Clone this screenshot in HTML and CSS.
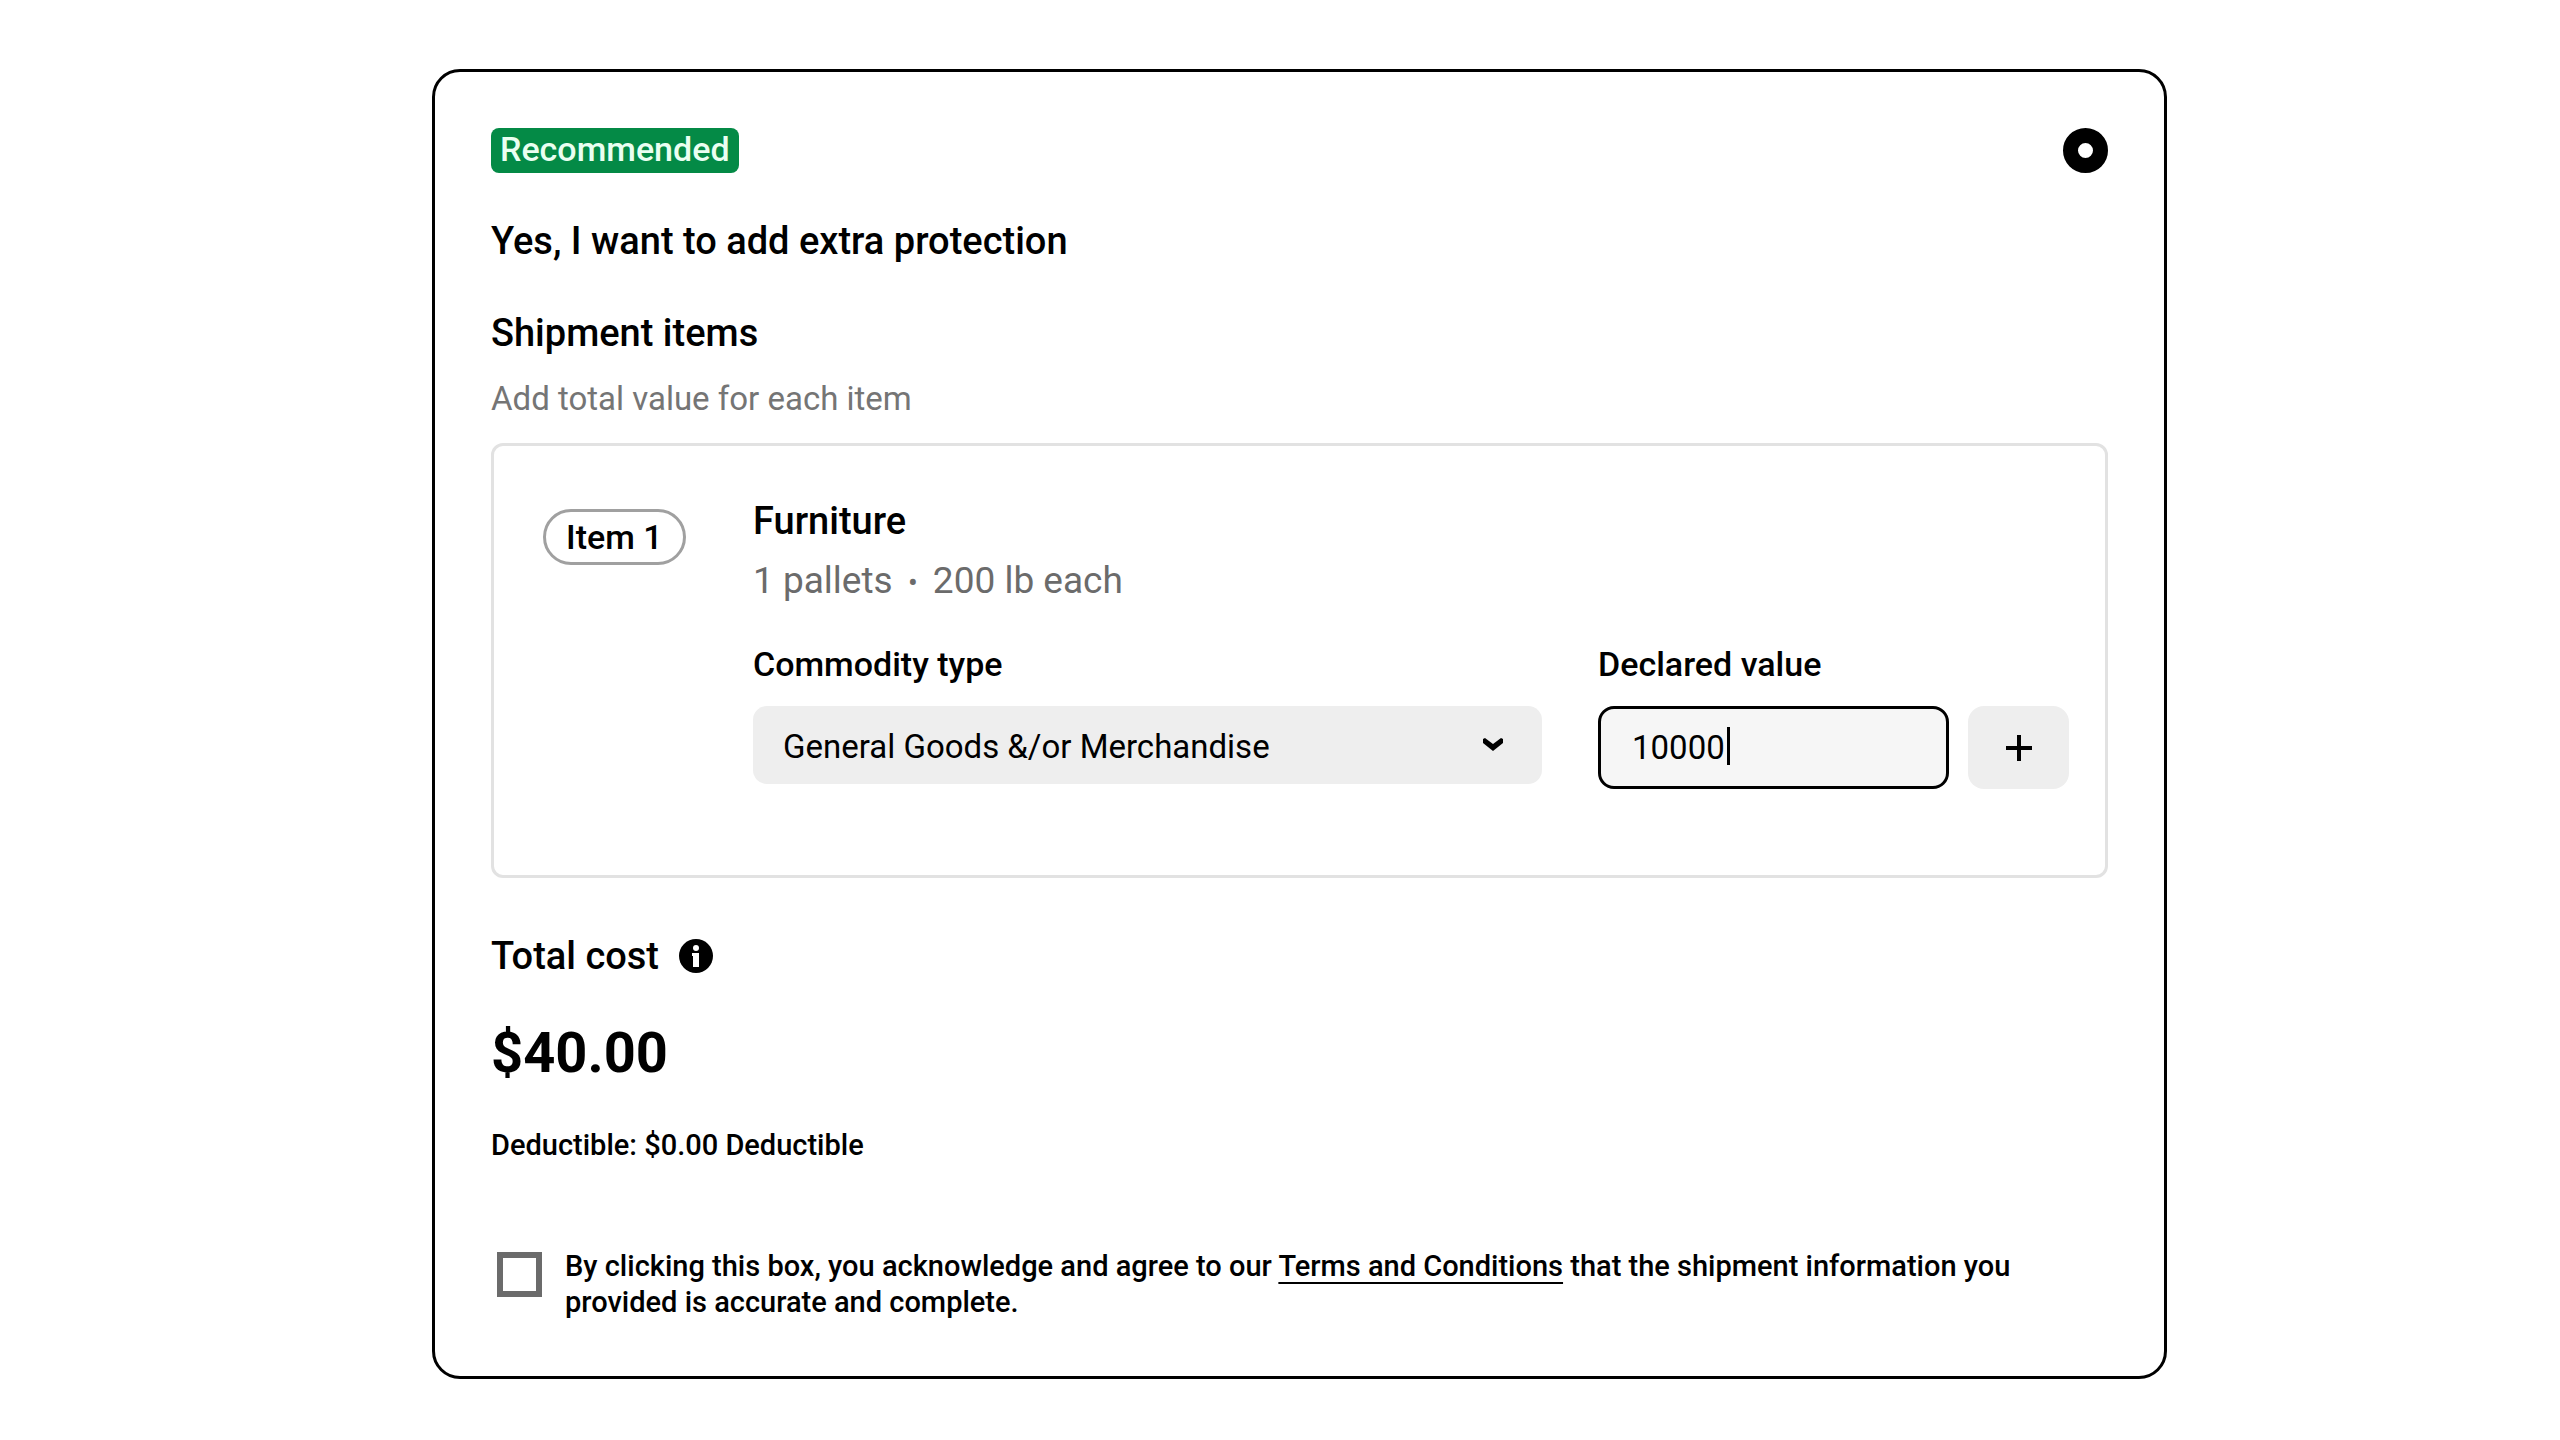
FILE: index.html
```html
<!DOCTYPE html>
<html lang="en">
<head>
    <meta charset="UTF-8">
    <meta name="viewport" content="width=device-width, initial-scale=1.0">
    <title>Extra protection</title>
    <link rel="stylesheet" href="styles.css">
</head>
<body>
    <main>
        <form class="card">
            <div class="card-top">
                <span class="badge">Recommended</span>
                <input type="radio" name="protection" id="protection-yes" class="radio" checked>
            </div>
            <label class="heading" for="protection-yes">Yes, I want to add extra protection</label>
            <h2 class="heading">Shipment items</h2>
            <p class="hint">Add total value for each item</p>

            <section class="item">
                <div><span class="pill">Item 1</span></div>
                <div class="item-body">
                    <h3 class="item-name">Furniture</h3>
                    <p class="item-info">1 pallets <span class="dot">•</span> 200 lb each</p>
                    <div class="fields">
                        <div class="field field-type">
                            <label for="commodity">Commodity type</label>
                            <div class="select-wrap">
                                <select id="commodity">
                                    <option>General Goods &amp;/or Merchandise</option>
                                </select>
                                <svg class="chevron" viewBox="0 0 20 14" aria-hidden="true">
                                    <path d="M0 1 2 0 10 6 18 0 20 1V5L10 13 0 5z"/>
                                </svg>
                            </div>
                        </div>
                        <div class="field field-value">
                            <label for="declared">Declared value</label>
                            <div class="value-row">
                                <div class="value-wrap">
                                    <input type="text" id="declared" value="10000" inputmode="numeric">
                                    <span class="caret"></span>
                                </div>
                                <button type="button" class="add" aria-label="Add">
                                    <svg viewBox="0 0 26 26" aria-hidden="true">
                                        <path d="M13 0v26M0 13h26"/>
                                    </svg>
                                </button>
                            </div>
                        </div>
                    </div>
                </div>
            </section>

            <h2 class="total-label">
                Total cost
                <svg class="info" viewBox="0 0 34 34" aria-hidden="true">
                    <circle cx="17" cy="17" r="17"/>
                    <circle class="info-mark" cx="17" cy="9" r="3"/>
                    <path class="info-mark" d="M13 14h7v14h-6V17h-1z"/>
                </svg>
            </h2>
            <p class="total">$40.00</p>
            <p class="deductible">Deductible: $0.00 Deductible</p>

            <div class="agree">
                <input type="checkbox" id="agree" class="checkbox">
                <label for="agree">By clicking this box, you acknowledge and agree to our <a href="#">Terms and Conditions</a> that the shipment information you provided is accurate and complete.</label>
            </div>
        </form>
    </main>
</body>
</html>
```
FILE: styles.css
```css
* {
    box-sizing: border-box;
}
body {
    font-family: Roboto, Arial, sans-serif;
    font-size: 33px;
    line-height: 40px;
    margin: 0;
    background-color: #fff;
    color: #000;
}
h2, h3, p {
    margin: 0;
    font-weight: 500;
}
input, select, button {
    font: inherit;
    color: inherit;
    margin: 0;
}
main {
    padding: 69px 393px 60px 432px;
}
.card {
    border: 3px solid #000;
    border-radius: 28px;
    padding: 56px;
}
.card-top {
    display: flex;
    justify-content: space-between;
    align-items: center;
}
.badge {
    background-color: #048a46;
    color: #eafff1;
    font-size: 34px;
    font-weight: 500;
    border-radius: 8px;
    padding: 1px 9px 4px;
}
.radio {
    appearance: none;
    width: 45px;
    height: 45px;
    border: 15px solid #000;
    border-radius: 50%;
    background-color: #fff;
}
.heading {
    display: block;
    font-size: 38px;
    font-weight: 500;
    line-height: 48px;
    margin-top: 44px;
}
.hint {
    color: #757575;
    font-weight: 400;
    margin-top: 22px;
}

/* shipment item */
.item {
    display: grid;
    grid-template-columns: 210px 1fr;
    border: 3px solid #e2e2e2;
    border-radius: 12px;
    margin-top: 24px;
    padding: 51px 36px 86px 49px;
}
.pill {
    display: inline-block;
    border: 3px solid #a0a0a0;
    border-radius: 28px;
    font-size: 34px;
    font-weight: 500;
    line-height: 50px;
    margin-top: 12px;
    padding: 0 20px;
}
.item-name {
    font-size: 38px;
    line-height: 48px;
}
.item-info {
    color: #6b6b6b;
    font-size: 37px;
    font-weight: 400;
    line-height: 48px;
    margin-top: 12px;
}
.dot {
    font-size: 29px;
    margin: 0 6px;
}
.fields {
    display: flex;
    gap: 56px;
    margin-top: 37px;
}
.field {
    display: flex;
    flex-direction: column;
    gap: 22px;
}
.field label {
    font-size: 34px;
    font-weight: 500;
}
.field-type {
    flex: 1;
}
.select-wrap, .value-wrap {
    position: relative;
}
.select-wrap select {
    appearance: none;
    width: 100%;
    height: 78px;
    border: none;
    border-radius: 14px;
    background-color: #eee;
    padding: 4px 30px 0;
}
.chevron {
    position: absolute;
    top: 32px;
    right: 39px;
    width: 20px;
    height: 14px;
    pointer-events: none;
}
.value-row {
    display: flex;
    gap: 19px;
}
.value-wrap {
    width: 351px;
}
.value-wrap input {
    width: 100%;
    height: 83px;
    border: 3px solid #000;
    border-radius: 16px;
    background-color: #f6f6f6;
    padding: 0 31px;
}
.caret {
    position: absolute;
    top: 21px;
    left: 129px;
    width: 3px;
    height: 38px;
    background-color: #000;
}
.add {
    display: flex;
    justify-content: center;
    align-items: center;
    width: 101px;
    height: 83px;
    border: none;
    border-radius: 16px;
    background-color: #eee;
}
.add svg {
    width: 26px;
    height: 26px;
    stroke: #000;
    stroke-width: 4px;
}

/* cost */
.total-label {
    display: flex;
    align-items: center;
    gap: 20px;
    font-size: 38px;
    line-height: 48px;
    margin-top: 54px;
}
.info {
    width: 34px;
    height: 34px;
}
.info-mark {
    fill: #fff;
}
.total {
    font-size: 56px;
    font-weight: 700;
    line-height: 64px;
    margin-top: 41px;
}
.deductible {
    font-size: 29px;
    line-height: 36px;
    margin-top: 42px;
}
.agree {
    display: flex;
    align-items: flex-start;
    gap: 23px;
    font-size: 29px;
    font-weight: 500;
    line-height: 36px;
    margin-top: 85px;
    padding: 0 30px 0 6px;
}
.checkbox {
    appearance: none;
    flex: none;
    width: 45px;
    height: 45px;
    border: 6px solid #6b6b6b;
    margin-top: 4px;
}
.agree a {
    color: inherit;
    text-decoration: underline;
    text-decoration-thickness: 2px;
    text-decoration-skip-ink: none;
    text-underline-offset: 6px;
}
```
